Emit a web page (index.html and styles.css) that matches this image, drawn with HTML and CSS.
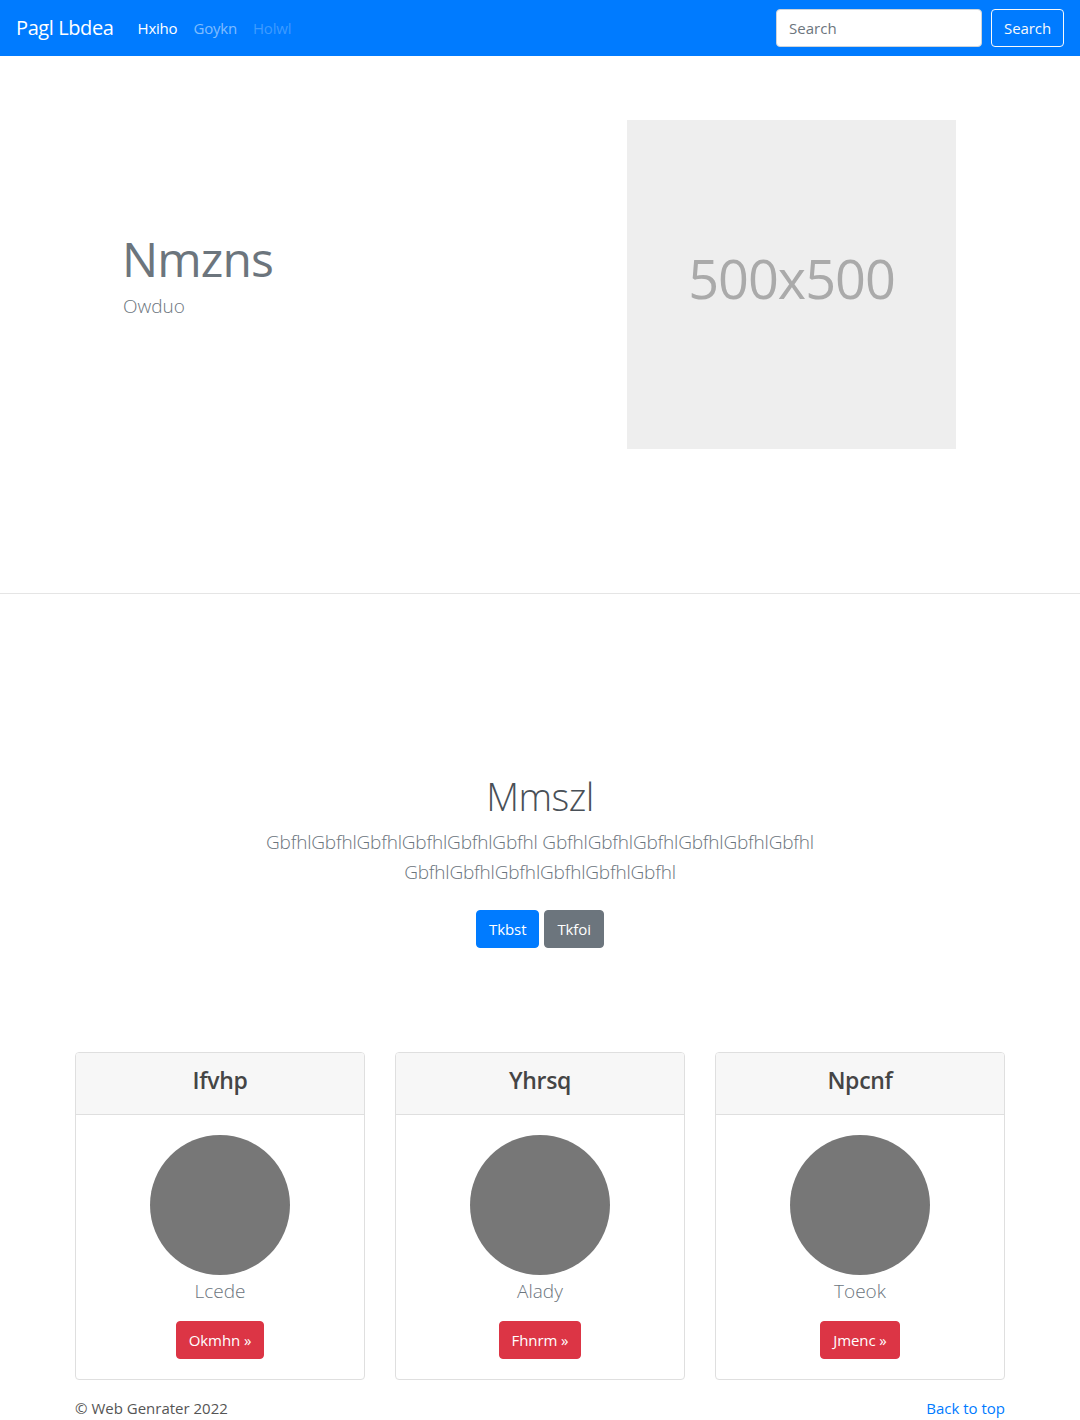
FILE: index.html
```html
<!DOCTYPE html>
<html lang="en">
<head>
<meta charset="utf-8">
<title>Pagl Lbdea</title>
<link rel="stylesheet" href="styles.css">
</head>
<body>
<nav class="navbar">
  <a class="brand" href="#">Pagl Lbdea</a>
  <ul class="nav">
    <li><a class="nav-link active" href="#">Hxiho</a></li>
    <li><a class="nav-link" href="#">Goykn</a></li>
    <li><a class="nav-link disabled" href="#">Holwl</a></li>
  </ul>
  <form class="search">
    <input class="search-input" type="text" placeholder="Search">
    <button class="btn btn-outline-light" type="button">Search</button>
  </form>
</nav>

<section class="hero">
  <div class="hero-inner">
    <div class="hero-text">
      <h1 class="hero-title">Nmzns</h1>
      <p class="hero-sub">Owduo</p>
    </div>
    <div class="placeholder">500x500</div>
  </div>
</section>

<section class="intro">
  <div class="intro-inner">
    <h1 class="intro-title">Mmszl</h1>
    <p class="lead">GbfhlGbfhlGbfhlGbfhlGbfhlGbfhl GbfhlGbfhlGbfhlGbfhlGbfhlGbfhl GbfhlGbfhlGbfhlGbfhlGbfhlGbfhl</p>
    <div class="intro-actions">
      <a class="btn btn-primary" href="#">Tkbst</a>
      <a class="btn btn-secondary" href="#">Tkfoi</a>
    </div>
  </div>
</section>

<section class="cards">
  <div class="card">
    <div class="card-header"><h4>Ifvhp</h4></div>
    <div class="card-body">
      <div class="avatar"></div>
      <p class="card-text">Lcede</p>
      <a class="btn btn-danger" href="#">Okmhn &raquo;</a>
    </div>
  </div>
  <div class="card">
    <div class="card-header"><h4>Yhrsq</h4></div>
    <div class="card-body">
      <div class="avatar"></div>
      <p class="card-text">Alady</p>
      <a class="btn btn-danger" href="#">Fhnrm &raquo;</a>
    </div>
  </div>
  <div class="card">
    <div class="card-header"><h4>Npcnf</h4></div>
    <div class="card-body">
      <div class="avatar"></div>
      <p class="card-text">Toeok</p>
      <a class="btn btn-danger" href="#">Jmenc &raquo;</a>
    </div>
  </div>
</section>

<footer class="footer">
  <span class="copy">&copy; Web Genrater 2022</span>
  <a class="back" href="#">Back to top</a>
</footer>
</body>
</html>
```

FILE: styles.css
```css
* { box-sizing: border-box; }
html, body { margin: 0; padding: 0; }
body {
  font-family: "Open Sans", "Noto Sans", "Liberation Sans", sans-serif;
  font-size: 16px;
  line-height: 1.5;
  color: #212529;
  background: #fff;
}
a { text-decoration: none; }

/* navbar */
.navbar {
  height: 56px;
  background: #007bff;
  display: flex;
  align-items: center;
  padding: 0 16px;
}
.brand {
  color: #fff;
  font-size: 20px;
  line-height: 30px;
  margin-right: 16px;
  letter-spacing: -0.4px;
}
.nav {
  display: flex;
  list-style: none;
  margin: 0;
  padding: 0;
  flex: 1;
}
.nav-link {
  display: block;
  padding: 8px 8px;
  color: rgba(255,255,255,.5);
  font-size: 15px;
  letter-spacing: -0.2px;
}
.nav-link.active { color: #fff; }
.nav-link.disabled { color: rgba(255,255,255,.25); }
.search { display: flex; align-items: center; }
.search-input {
  width: 206px;
  height: 38px;
  margin-right: 9px;
  border: 1px solid #ced4da;
  border-radius: 4px;
  padding: 6px 12px;
  font-family: inherit;
  font-size: 15px;
  color: #495057;
}
.search-input::placeholder { color: #6c757d; }

/* buttons */
.btn {
  display: inline-block;
  height: 38px;
  padding: 0 12px;
  border: 1px solid transparent;
  border-radius: 4px;
  font-family: inherit;
  font-size: 15px;
  line-height: 36px;
  color: #fff;
  letter-spacing: -0.1px;
}
.btn-outline-light {
  background: transparent;
  border-color: #f8f9fa;
  color: #f8f9fa;
}
.btn-primary { background: #007bff; border-color: #007bff; }
.btn-secondary { background: #6c757d; border-color: #6c757d; }
.btn-danger { background: #dc3545; border-color: #dc3545; }

/* hero */
.hero {
  border-bottom: 1px solid #e5e5e5;
  padding: 64px 0 144px;
}
.hero-inner {
  width: 930px;
  margin: 0 auto;
  display: flex;
  align-items: center;
}
.hero-text {
  width: 552px;
  padding-left: 47px;
  color: #6c757d;
  padding-bottom: 19px;
}
.hero-title {
  margin: 0;
  font-size: 48px;
  font-weight: 400;
  line-height: 1.2;
  letter-spacing: -0.9px;
}
.hero-sub {
  margin: 5px 0 0 1px;
  font-size: 19px;
  font-weight: 300;
  line-height: 1.4;
}
.placeholder {
  width: 329px;
  height: 329px;
  background: #eee;
  color: #aaa;
  display: flex;
  align-items: center;
  justify-content: center;
  font-size: 54px;
  letter-spacing: -1px;
  padding-bottom: 12px;
}

/* intro */
.intro {
  padding: 180px 0 104px;
  text-align: center;
}
.intro-inner {
  max-width: 640px;
  margin: 0 auto;
  padding: 0 15px;
}
.intro-title {
  margin: 0 0 7px;
  font-size: 38px;
  font-weight: 300;
  line-height: 1.2;
  color: #495057;
  letter-spacing: -0.5px;
}
.lead {
  margin: 0 0 23px;
  font-size: 19px;
  font-weight: 300;
  line-height: 30px;
  color: #6c757d;
  letter-spacing: -0.2px;
}
.intro-actions {
  display: flex;
  justify-content: center;
  gap: 5px;
}

/* cards */
.cards {
  width: 930px;
  margin: 0 auto;
  display: grid;
  grid-template-columns: repeat(3, 1fr);
  gap: 30px;
}
.card {
  border: 1px solid #dfdfdf;
  border-radius: 4px;
  overflow: hidden;
  text-align: center;
}
.card-header {
  background: #f7f7f7;
  border-bottom: 1px solid #dfdfdf;
  height: 62px;
  padding-bottom: 6px;
  display: flex;
  align-items: center;
  justify-content: center;
}
.card-header h4 {
  margin: 0;
  font-size: 23px;
  font-weight: 600;
  color: #454545;
  letter-spacing: -0.3px;
}
.card-body {
  padding: 20px 20px 20px;
}
.avatar {
  width: 140px;
  height: 140px;
  border-radius: 50%;
  background: #777;
  margin: 0 auto;
}
.card-text {
  margin: 1px 0 15px;
  font-size: 19px;
  font-weight: 300;
  line-height: 30px;
  color: #6c757d;
}

/* footer */
.footer {
  width: 930px;
  margin: 0 auto;
  display: flex;
  justify-content: space-between;
  padding-top: 16px;
  font-size: 15px;
  line-height: 24px;
}
.copy { color: #555; }
.back { color: #007bff; }
```
